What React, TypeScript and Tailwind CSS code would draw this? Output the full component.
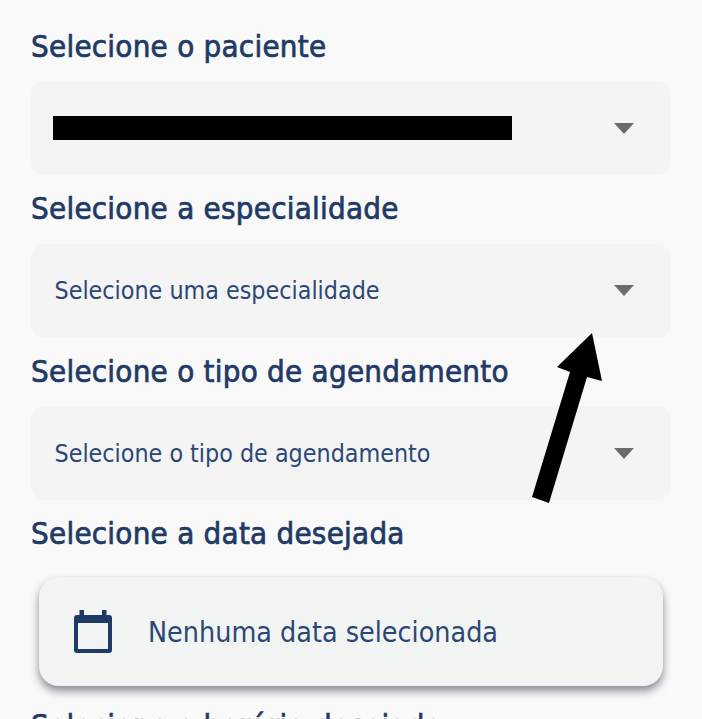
import React from "react";

function Caret() {
  return (
    <svg width="20" height="11" viewBox="0 0 20 11" className="shrink-0">
      <path d="M0 0H20L10 11Z" fill="#6b6b6b" />
    </svg>
  );
}

function Label({ children }: { children: React.ReactNode }) {
  return (
    <div className="ml-[31px] text-[31px] leading-[34px] [font-stretch:condensed] [-webkit-text-stroke:0.7px_#1f3a66] tracking-[0.25px] whitespace-nowrap text-[#1f3a66]">
      {children}
    </div>
  );
}

function Select({ children }: { children: React.ReactNode }) {
  return (
    <div className="mx-[31px] mt-[18.5px] mb-[16px] h-[94px] rounded-[14px] bg-[#f4f4f4] flex items-center justify-between pl-[23.5px] pr-[37px]">
      <div className="text-[24.8px] [font-stretch:condensed] text-[#2b4874]">{children}</div>
      <Caret />
    </div>
  );
}

export default function App() {
  return (
    <div className="relative w-[702px] h-[719px] overflow-hidden bg-[#f9f9f9] pt-[28.6px] font-['DejaVu_Sans',sans-serif]">
      <Label>Selecione o paciente</Label>
      <Select><div className="-ml-[1.5px] w-[459px] h-[24px] bg-black" /></Select>
      <Label>Selecione a especialidade</Label>
      <Select>Selecione uma especialidade</Select>
      <Label>Selecione o tipo de agendamento</Label>
      <Select>Selecione o tipo de agendamento</Select>
      <Label>Selecione a data desejada</Label>
      <div className="mx-[39px] mt-[27px] mb-[22px] h-[109px] rounded-[20px] bg-[#f2f4f4] shadow-[0_5px_8px_rgba(40,50,70,0.55)] flex items-center pl-[35px] gap-[36px]">
        <svg width="38" height="43" viewBox="0 0 38 43" className="shrink-0">
          <path fillRule="evenodd" d="M5.5 0h4.5v5h18V0h4.5v5H35a3 3 0 0 1 3 3v32a3 3 0 0 1-3 3H3a3 3 0 0 1-3-3V8a3 3 0 0 1 3-3h2.5V0ZM4 13v26h30V13H4Z" fill="#1f3a66" />
        </svg>
        <div className="pt-[3px] text-[28.4px] [font-stretch:condensed] whitespace-nowrap text-[#2b4874]">Nenhuma data selecionada</div>
      </div>
      <Label>Selecione o horário desejado</Label>
      <svg className="absolute left-[528px] top-[330px]" width="80" height="175" viewBox="0 0 80 175">
        <path d="M64 3 L29 37 L42 42 L4 167 L21 173 L59 47 L74 51Z" fill="#000" />
      </svg>
    </div>
  );
}
